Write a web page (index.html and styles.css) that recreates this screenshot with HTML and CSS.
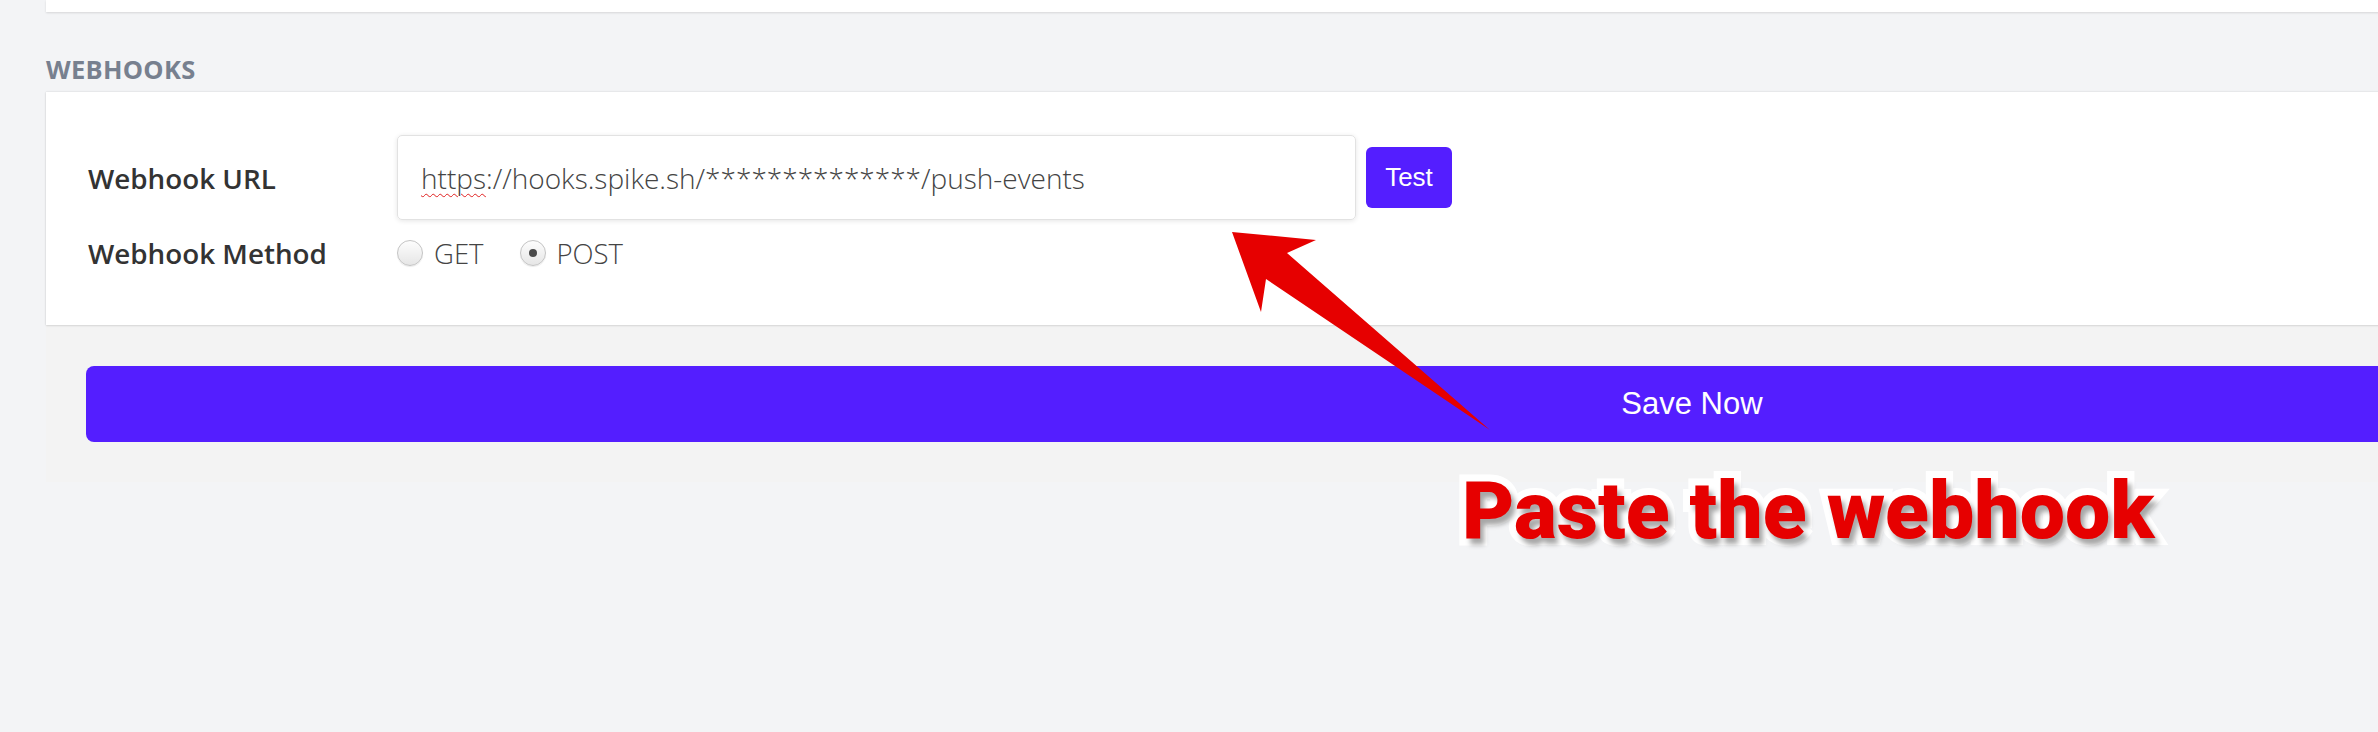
FILE: index.html
```html
<!DOCTYPE html>
<html>
<head>
<meta charset="utf-8">
<link rel="stylesheet" href="styles.css">
</head>
<body>
<div class="page">
  <div class="top-card"></div>
  <h2 class="section-title">WEBHOOKS</h2>
  <div class="panel">
    <div class="card">
      <div class="row row--url">
        <label class="label">Webhook URL</label>
        <div class="field">
          <div class="text-input" role="textbox"><span class="misspelled">https</span>://hooks.spike.sh/**************/push-events</div>
          <button class="btn-test">Test</button>
        </div>
      </div>
      <div class="row row--method">
        <label class="label">Webhook Method</label>
        <div class="radios">
          <label class="radio-opt"><input type="radio" name="m" class="radio"><span>GET</span></label>
          <label class="radio-opt"><input type="radio" name="m" class="radio" checked><span>POST</span></label>
        </div>
      </div>
    </div>
    <button class="btn-save">Save Now</button>
  </div>
  <svg class="arrow" width="2378" height="732" viewBox="0 0 2378 732">
    <polygon fill="#e60000" points="1232,232 1316,240 1287,253 1490,430 1266,279 1261,312"/>
  </svg>
  <div class="annotation">Paste the webhook</div>
</div>
</body>
</html>
```

FILE: styles.css
```css
html, body {
  margin: 0;
  padding: 0;
  width: 2378px;
  height: 732px;
  overflow: hidden;
  background: #f3f4f6;
}
.page {
  position: relative;
  width: 2378px;
  height: 732px;
  overflow: hidden;
  font-family: "Open Sans", sans-serif;
}
.top-card {
  margin-left: 46px;
  width: 3292px;
  height: 12px;
  background: #fff;
  box-shadow: 0 1px 2px rgba(0,0,0,0.12);
}
.section-title {
  margin: 0 0 0 46px;
  padding-top: 37px;
  height: 43px;
  font-size: 25.5px;
  line-height: 40px;
  font-weight: 700;
  color: #77808f;
  letter-spacing: 0.3px;
}
.panel {
  margin-left: 46px;
  width: 3292px;
  background: #f3f3f3;
  padding-bottom: 40px;
  display: flex;
  flex-direction: column;
}
.card {
  background: #fff;
  box-shadow: 0 0 2px rgba(0,0,0,0.14), 0 1px 2px rgba(0,0,0,0.08);
  padding: 43px 0 53px 42px;
  display: flex;
  flex-direction: column;
  gap: 14px;
}
.row {
  display: flex;
  align-items: center;
}
.label {
  width: 309px;
  font-size: 27.8px;
  font-weight: 600;
  color: #333;
}
.field {
  display: flex;
  align-items: center;
  gap: 10px;
}
.text-input {
  box-sizing: border-box;
  width: 959px;
  height: 85px;
  border: 1px solid #e2e2e2;
  border-radius: 5px;
  box-shadow: 0 1px 5px rgba(0,0,0,0.1);
  padding-left: 23px;
  display: flex;
  align-items: center;
  font-size: 28px;
  font-weight: 300;
  color: #444;
}
.misspelled {
  text-decoration: underline wavy #e02020;
  text-decoration-thickness: 1px;
  text-underline-offset: 4px;
}
.btn-test {
  width: 86px;
  height: 61px;
  border: none;
  border-radius: 6px;
  background: #541eff;
  color: #fff;
  font-family: "Liberation Sans", Arial, sans-serif;
  font-size: 26px;
  padding: 0;
}
.radios {
  display: flex;
  gap: 36px;
}
.radio-opt {
  display: flex;
  align-items: center;
  gap: 11px;
  font-size: 27.5px;
  font-weight: 300;
  color: #444;
}
.radio {
  appearance: none;
  -webkit-appearance: none;
  margin: 0;
  width: 26px;
  height: 26px;
  border-radius: 50%;
  border: 1px solid #c4c4c4;
  background: linear-gradient(#fdfdfd, #e6e6e6);
  box-shadow: 0 1px 1px rgba(0,0,0,0.08);
  position: relative;
}
.radio:checked::after {
  content: "";
  position: absolute;
  left: 50%;
  top: 50%;
  width: 8px;
  height: 8px;
  margin: -4px 0 0 -4px;
  border-radius: 50%;
  background: #4a4a4a;
}
.btn-save {
  margin: 41px 40px 0 40px;
  height: 76px;
  border: none;
  border-radius: 8px;
  background: #541eff;
  color: #fff;
  font-family: "Liberation Sans", Arial, sans-serif;
  font-size: 31px;
}
.arrow {
  position: absolute;
  left: 0;
  top: 0;
}
.annotation {
  position: absolute;
  left: 1462px;
  top: 461px;
  font-family: Roboto, sans-serif;
  font-weight: 900;
  font-size: 80.5px;
  line-height: 100px;
  color: #e60000;
  -webkit-text-stroke: 14px #fff;
  paint-order: stroke fill;
  text-shadow: 4px 6px 5px rgba(0,0,0,0.35);
  white-space: nowrap;
}
```
